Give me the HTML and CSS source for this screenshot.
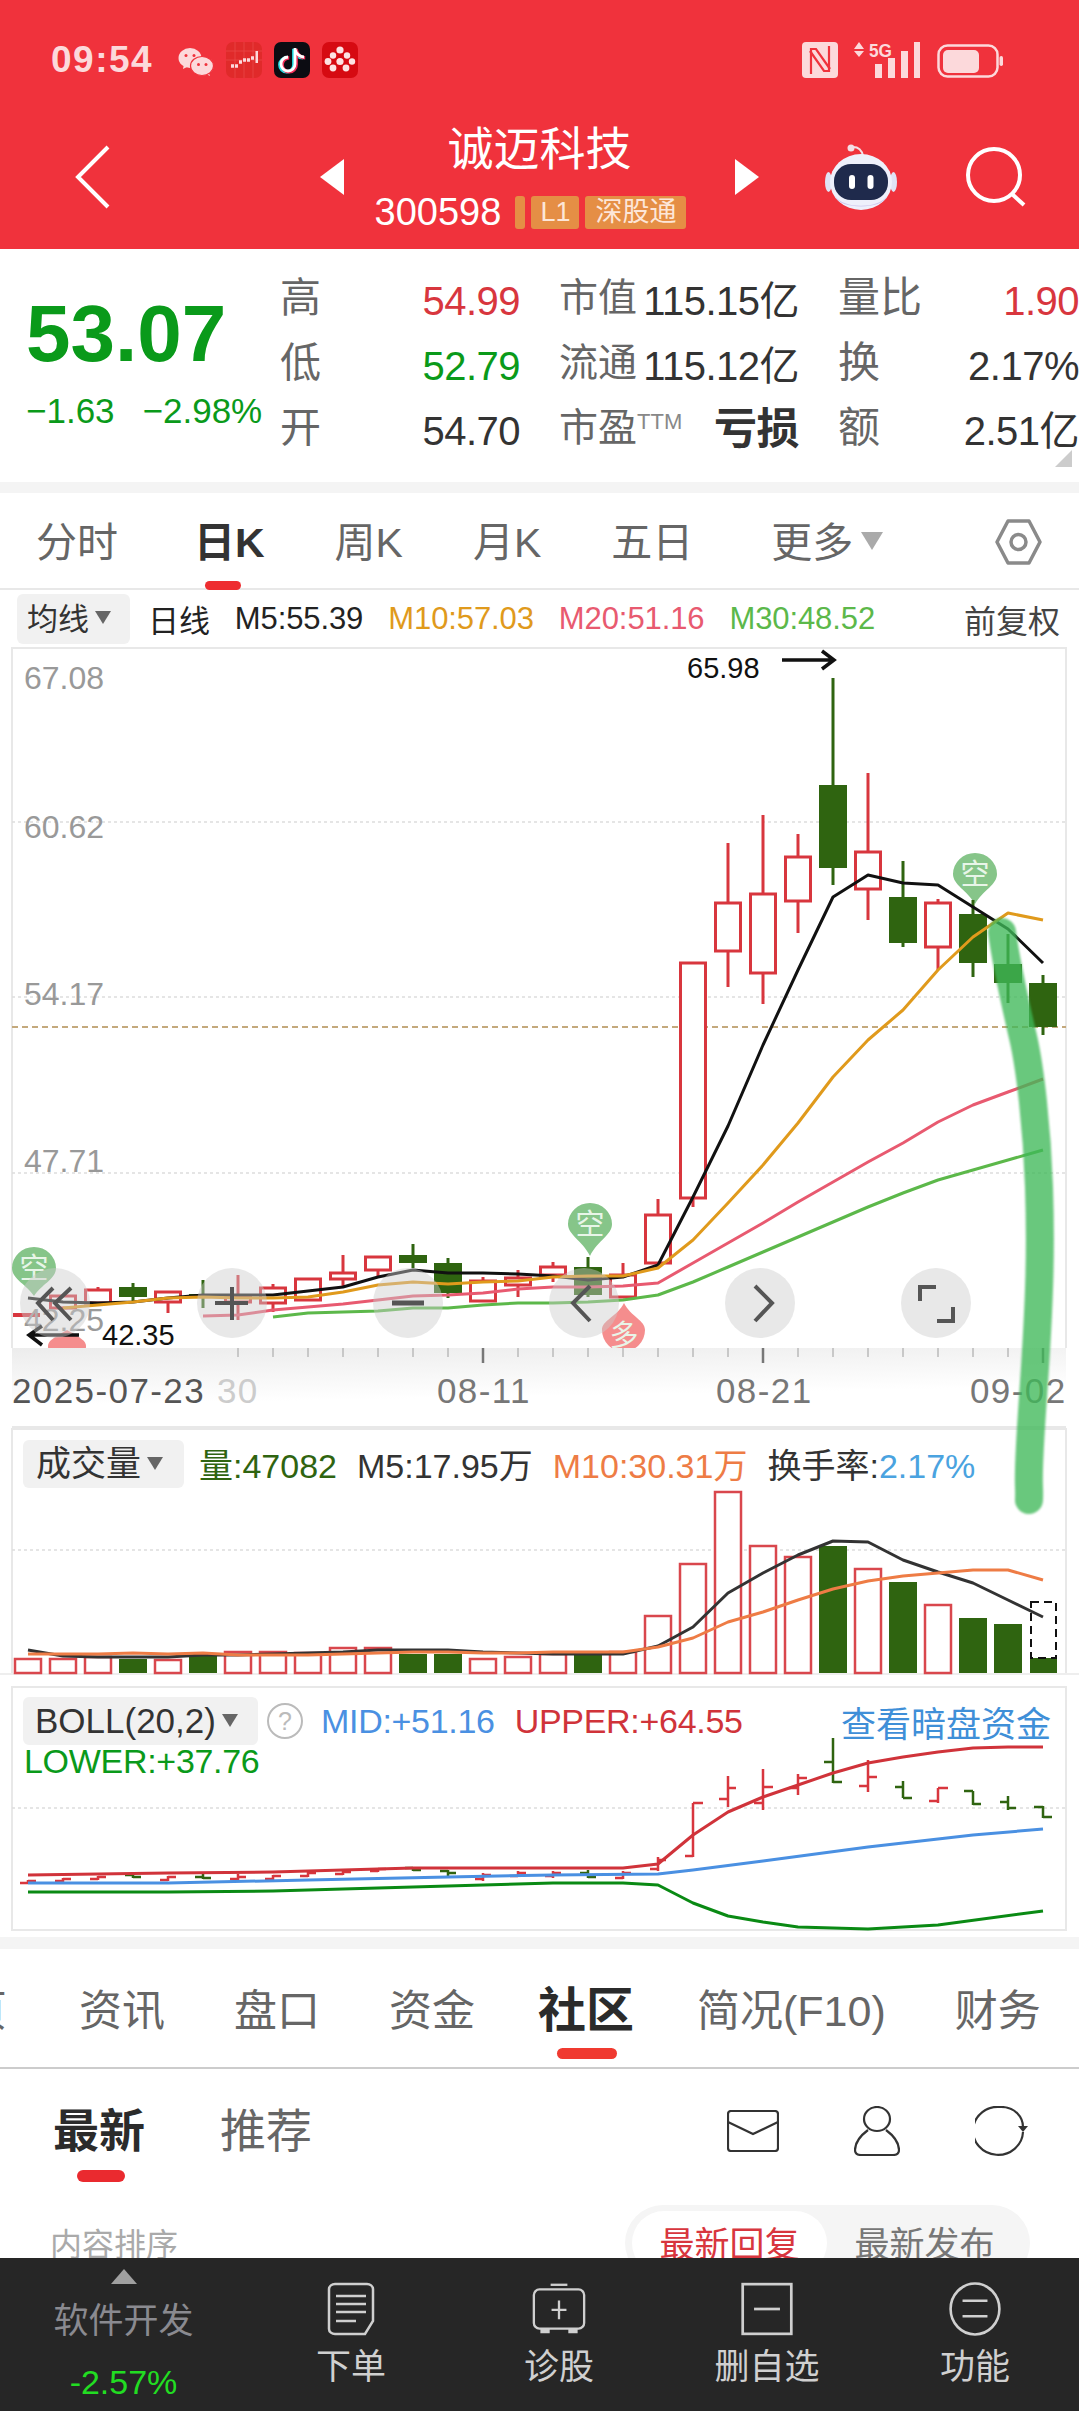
FILE: index.html
```html
<!DOCTYPE html>
<html lang="zh-CN">
<head>
  <meta charset="UTF-8" />
  <title>诚迈科技</title>
  <link rel="stylesheet" href="styles.css">
</head>
<body>
<div class="page">

  <header class="top">
    <div class="status">
      <span class="time">09:54</span>
      <svg class="st-icon wechat" viewBox="0 0 36 36"><path d="M6 22l-1 5 6-3z" fill="#fcd9db"/><ellipse cx="12" cy="16" rx="11.5" ry="10" fill="#fcd9db"/><ellipse cx="8" cy="13.5" rx="1.5" ry="1.5" fill="#f0323c"/><ellipse cx="16" cy="13.5" rx="1.5" ry="1.5" fill="#f0323c"/><path d="M30 29l2 5-6-3z" fill="#fcd9db"/><ellipse cx="24" cy="24" rx="11.5" ry="9.5" fill="#fcd9db" stroke="#f0323c" stroke-width="1.2"/><ellipse cx="20.5" cy="22.5" rx="1.5" ry="1.5" fill="#f0323c"/><ellipse cx="28" cy="22.5" rx="1.5" ry="1.5" fill="#f0323c"/></svg>
      <svg class="st-icon" viewBox="0 0 36 36"><rect width="36" height="36" rx="7" fill="#e02a2a"/><path d="M0 9H36M0 18H36M9 0V36M18 0V36M27 0V36" fill="none" stroke="#e94a4a" stroke-width="0.7"/><path d="M5 24h3M9 24h3M13 20h3M17 18h3M21 18h3M25 16h3" fill="none" stroke="#fcd9db" stroke-width="3.5"/><rect x="29.5" y="9" width="2.5" height="12" fill="#fcd9db"/></svg>
      <svg class="st-icon" viewBox="0 0 36 36"><rect width="36" height="36" rx="7" fill="#0c0c12"/><g fill="none" stroke-width="3.4"><path d="M21 6v16a7 7 0 1 1-7-7M21 7c1 5 5 8 9 8" stroke="#25e0e6" transform="translate(-1.2 0.8)"/><path d="M21 6v16a7 7 0 1 1-7-7M21 7c1 5 5 8 9 8" stroke="#f0305a" transform="translate(1.2 0.8)"/><path d="M21 6v16a7 7 0 1 1-7-7M21 7c1 5 5 8 9 8" stroke="#fff" stroke-width="2.8"/></g></svg>
      <svg class="st-icon" viewBox="0 0 36 36"><rect width="36" height="36" rx="7" fill="#d60a12"/><g fill="#fde3e3"><circle cx="18" cy="8" r="3.6"/><circle cx="11" cy="13.5" r="3.2"/><circle cx="25" cy="13.5" r="3.2"/><circle cx="6" cy="19.5" r="3.4"/><circle cx="18" cy="19.5" r="3.6"/><circle cx="30" cy="19.5" r="3.2"/><circle cx="11" cy="26" r="3.4"/><circle cx="24" cy="26" r="3.4"/></g></svg>
      <span class="spacer"></span>
      <svg class="st-nfc" viewBox="0 0 36 36"><rect x="0" y="0" width="36" height="36" rx="4" fill="#fcd9db"/><path d="M9 32V7h5l14 20" fill="none" stroke="#f0323c" stroke-width="2.2"/><path d="M27 4V29h-5L8 9" fill="none" stroke="#f0323c" stroke-width="2.2"/></svg>
      <svg class="st-signal" viewBox="0 0 67 36"><path d="M5 0l5 7H0zM5 15l5-6H0z" fill="#fcd9db"/><text x="15" y="15" class="st-5g" textLength="23" lengthAdjust="spacingAndGlyphs">5G</text><g fill="#fcd9db"><rect x="21" y="22" width="7" height="14"/><rect x="34" y="16" width="7" height="20"/><rect x="47" y="9" width="7" height="27"/><rect x="60" y="0" width="6" height="36"/></g></svg>
      <svg class="st-batt" viewBox="0 0 66 36"><rect x="1.5" y="3.5" width="59" height="31" rx="9" fill="none" stroke="#fcd9db" stroke-width="2.5"/><rect x="6" y="8" width="36" height="23" rx="5" fill="#fcd9db"/><rect x="62.5" y="14" width="3.5" height="10" rx="1.7" fill="#fcd9db"/></svg>
    </div>
    <div class="title-row">
      <svg class="back" viewBox="0 0 35 64"><path d="M33 2L3 32l30 30" fill="none" stroke="#fff" stroke-width="4"/></svg>
      <span class="tri tri-left"></span>
      <div class="title-block">
        <div class="stock-name">诚迈科技</div>
        <div class="code-row">
          <span class="code">300598</span>
          <span class="tag tag-sliver"></span>
          <span class="tag tag-l1">L1</span>
          <span class="tag">深股通</span>
        </div>
      </div>
      <span class="tri tri-right"></span>
      <svg class="robot" viewBox="0 0 72 66"><circle cx="26" cy="4" r="3.5" fill="#f3dfe6"/><path d="M28 3c6 0 9 4 10 9" fill="none" stroke="#f3dfe6" stroke-width="2"/><ellipse cx="3.5" cy="38" rx="3.5" ry="10" fill="#dfe3f5"/><ellipse cx="68.5" cy="38" rx="3.5" ry="10" fill="#dfe3f5"/><ellipse cx="36" cy="38" rx="31" ry="28" fill="#eef0fb"/><path d="M10 52c8 13 44 13 52 0-4 14-48 14-52 0z" fill="#cfc8ee"/><rect x="9" y="20" width="54" height="36" rx="17" fill="#1f2a4c"/><rect x="24" y="31" width="6" height="14" rx="3" fill="#fff"/><rect x="42.500" y="31" width="6" height="14" rx="3" fill="#fff"/></svg>
      <svg class="search" viewBox="0 0 60 60"><circle cx="28" cy="28" r="26" fill="none" stroke="#fff" stroke-width="4"/><path d="M46 47l12 11" fill="none" stroke="#fff" stroke-width="4"/></svg>
    </div>
  </header>

  <section class="quote">
    <div class="quote-main">
      <div class="last-price">53.07</div>
      <div class="change"><span>−1.63</span><span>−2.98%</span></div>
    </div>
    <div class="quote-grid">
      <div class="q"><span class="q-label q-one">高</span><span class="q-val up">54.99</span></div>
      <div class="q"><span class="q-label">市值</span><span class="q-val">115.15亿</span></div>
      <div class="q"><span class="q-label q-wide">量比</span><span class="q-val up">1.90</span></div>
      <div class="q"><span class="q-label q-one">低</span><span class="q-val down">52.79</span></div>
      <div class="q"><span class="q-label">流通</span><span class="q-val">115.12亿</span></div>
      <div class="q"><span class="q-label q-wide">换</span><span class="q-val">2.17%</span></div>
      <div class="q"><span class="q-label q-one">开</span><span class="q-val">54.70</span></div>
      <div class="q"><span class="q-label">市盈<sup class="ttm">TTM</sup></span><span class="q-val q-bold">亏损</span></div>
      <div class="q"><span class="q-label q-wide">额</span><span class="q-val">2.51亿</span></div>
    </div>
    <span class="corner"></span>
  </section>

  <div class="band"></div>

  <nav class="period-tabs">
    <span class="ptab first">分时</span>
    <span class="ptab active">日K</span>
    <span class="ptab">周K</span>
    <span class="ptab">月K</span>
    <span class="ptab">五日</span>
    <span class="ptab more">更多<i class="caret caret-big"></i></span>
    <svg class="hex" viewBox="0 0 47 46"><path d="M13 2h21l11 21-11 21H13L2 23z" fill="none" stroke="#8a8a8a" stroke-width="3.5" stroke-linejoin="round"/><circle cx="23.5" cy="23" r="7.5" fill="none" stroke="#8a8a8a" stroke-width="3.5"/></svg>
  </nav>

  <div class="charts">
    <div class="ma-bar">
      <span class="chip chip-ma">均线<i class="caret"></i></span>
      <span class="ma ma-day">日线</span>
      <span class="ma">M5:55.39</span>
      <span class="ma c-m10">M10:57.03</span>
      <span class="ma c-m20">M20:51.16</span>
      <span class="ma c-m30">M30:48.52</span>
      <span class="fq">前复权</span>
    </div>

    <svg class="kline" viewBox="0 647 1079 781" width="1079" height="781">
      <defs>
        <linearGradient id="axisfade" x1="0" y1="0" x2="0.25" y2="1">
          <stop offset="0" stop-color="#ececec"/>
          <stop offset="0.7" stop-color="#fff"/>
        </linearGradient>
        <clipPath id="plot"><rect x="0" y="647" width="1079" height="701"/></clipPath>
      </defs>
      <rect x="12" y="1348" width="1054" height="78" fill="url(#axisfade)"/>
      <path class="frame" d="M12 1348V648H1066V1348"/>
      <path class="frame" d="M12 1427H1066"/>
      <path class="grid" d="M12 822H1066M12 997H1066M12 1173H1066"/>
      <path class="now-line" d="M12 1027H1066"/>
      <text class="axis-y" x="24" y="689">67.08</text>
      <text class="axis-y" x="24" y="838">60.62</text>
      <text class="axis-y" x="24" y="1005">54.17</text>
      <text class="axis-y" x="24" y="1172">47.71</text>

      <!-- pins under the candles -->
      <g class="pin-green">
        <path d="M12 1268a22 21 0 0 1 44 0c0 11-14 16-22 28-8-12-22-17-22-28z"/>
        <path d="M568 1224a22 21 0 0 1 44 0c0 11-14 16-22 32-8-16-22-21-22-32z"/>
        <path d="M953 874a22 21 0 0 1 44 0c0 11-14 16-22 30-8-14-22-19-22-30z"/>
      </g>
      <text class="pin-text" x="34" y="1279">空</text>
      <text class="pin-text" x="590" y="1235">空</text>
      <text class="pin-text" x="975" y="885">空</text>

      <!-- wicks -->
      <path class="wick-up" d="M868 773V920M798 834V933M763 815V1004M728 843V987M693 963V1207M658 1199V1263M938 899V970M623 1263V1297M553 1262V1282M518 1270V1297M483 1277V1301M378 1257V1278M343 1255V1288M308 1279V1300M273 1284V1312M238 1275V1320M168 1292V1313M98 1287V1305"/>
      <path class="wick-down" d="M833 678V885M903 861V947M973 900V977M1008 934V1003M1043 975V1035M588 1257V1297M448 1258V1298M413 1244V1268M133 1283V1302M203 1280V1308"/>

      <!-- rising bodies -->
      <g class="body-up">
        <rect x="855.5" y="852" width="25" height="37"/>
        <rect x="785.5" y="857" width="25" height="44"/>
        <rect x="750.5" y="894" width="25" height="79"/>
        <rect x="715.5" y="903" width="25" height="48"/>
        <rect x="680.5" y="963" width="25" height="235"/>
        <rect x="645.5" y="1215" width="25" height="48"/>
        <rect x="925.5" y="903" width="25" height="44"/>
        <rect x="610.5" y="1275" width="25" height="22"/>
        <rect x="540.5" y="1267" width="25" height="8"/>
        <rect x="505.5" y="1278" width="25" height="7"/>
        <rect x="470.5" y="1281" width="25" height="20"/>
        <rect x="365.5" y="1257" width="25" height="13"/>
        <rect x="330.5" y="1273" width="25" height="6"/>
        <rect x="295.5" y="1279" width="25" height="21"/>
        <rect x="260.5" y="1288" width="25" height="15"/>
        <rect x="225.5" y="1297" width="25" height="5"/>
        <rect x="155.5" y="1292" width="25" height="10"/>
        <rect x="85.5" y="1290" width="25" height="13"/>
        <rect x="50.5" y="1296" width="25" height="12"/>
      </g>
      <rect class="body-flat" x="13" y="1313" width="27" height="4"/>

      <!-- falling bodies -->
      <g class="body-down">
        <rect x="819" y="785" width="28" height="83"/>
        <rect x="889" y="897" width="28" height="46"/>
        <rect x="959" y="914" width="28" height="49"/>
        <rect x="994" y="964" width="28" height="19"/>
        <rect x="1029" y="983" width="28" height="44"/>
        <rect x="574" y="1267" width="28" height="28"/>
        <rect x="434" y="1263" width="28" height="30"/>
        <rect x="399" y="1255" width="28" height="8"/>
        <rect x="119" y="1287" width="28" height="10"/>
        <rect x="189" y="1294" width="28" height="3"/>
      </g>

      <!-- moving averages -->
      <path class="line l-m30" d="M273 1317L308 1313 343 1312 378 1311 413 1308 448 1308 483 1305 518 1303 553 1303 588 1302 623 1300 658 1295 693 1282 728 1267 763 1252 798 1237 833 1222 868 1207 903 1193 938 1180 973 1170 1008 1160 1043 1150"/>
      <path class="line l-m20" d="M203 1316L238 1315 273 1310 308 1307 343 1304 378 1300 413 1296 448 1295 483 1293 518 1289 553 1287 588 1287 623 1286 658 1283 693 1263 728 1243 763 1223 798 1202 833 1182 868 1162 903 1143 938 1122 973 1105 1008 1092 1043 1079"/>
      <path class="line l-m5" d="M28 1298L63 1302 98 1303 133 1302 168 1298 203 1295 238 1295 273 1295 308 1291 343 1287 378 1277 413 1270 448 1273 483 1273 518 1274 553 1276 588 1280 623 1277 658 1265 693 1197 728 1126 763 1045 798 970 833 897 868 875 903 883 938 885 973 907 1008 929 1043 963"/>
      <path class="line l-m10" d="M63 1308L98 1305 133 1302 168 1298 203 1297 238 1298 273 1298 308 1297 343 1292 378 1285 413 1282 448 1284 483 1282 518 1281 553 1277 588 1276 623 1276 658 1268 693 1240 728 1203 763 1165 798 1123 833 1077 868 1040 903 1010 938 970 973 937 1008 913 1043 920"/>

      <!-- pins over the lines, cut at the axis -->
      <g clip-path="url(#plot)">
        <path class="pin-red" d="M602 1330a21 21 0 0 0 43 0c0-10-14-13-21-27-7 14-22 17-22 27z"/>
        <text class="pin-text" x="624" y="1346">多</text>
        <path class="pin-red" d="M48 1346a19 19 0 0 0 38 0c0-5-5-8-19-16-14 8-19 11-19 16z"/>
      </g>

      <!-- extreme price arrows -->
      <text class="mark" x="687" y="678">65.98</text>
      <path class="arrow" d="M782 660H833M822 651L834 660 822 669"/>
      <text class="axis-y" x="24" y="1331">42.25</text>
      <text class="mark" x="102" y="1345">42.35</text>
      <path class="arrow" d="M79 1335H30M42 1326L29 1335 42 1345"/>

      <!-- zoom and pan buttons -->
      <g class="nav-dot">
        <circle cx="55" cy="1303" r="35"/>
        <circle cx="232" cy="1303" r="35"/>
        <circle cx="408" cy="1303" r="35"/>
        <circle cx="584" cy="1303" r="35"/>
        <circle cx="760" cy="1303" r="35"/>
        <circle cx="936" cy="1303" r="35"/>
      </g>
      <path class="nav-ico" d="M53 1288L38 1303 53 1320M71 1288L55 1303 71 1320"/>
      <path class="nav-ico" d="M215 1303H248M232 1287V1320"/>
      <path class="nav-ico nav-bold" d="M392 1303H424"/>
      <path class="nav-ico" d="M590 1286L573 1303 590 1321"/>
      <path class="nav-ico" d="M755 1286L772 1303 755 1321"/>
      <path class="nav-ico" d="M936 1287H920V1301M937 1321H953V1307"/>

      <!-- date axis -->
      <path class="tick" d="M238 1348v9M273 1348v9M308 1348v9M343 1348v9M378 1348v9M413 1348v9M448 1348v9M518 1348v9M553 1348v9M588 1348v9M623 1348v9M658 1348v9M693 1348v9M728 1348v9M798 1348v9M833 1348v9M868 1348v9M903 1348v9M938 1348v9M973 1348v9M1008 1348v9"/>
      <path class="tick-big" d="M483 1348v15M763 1348v15M1043 1348v15"/>
      <text class="date date-first" x="12" y="1403">2025-07-23</text>
      <text class="date date-fade" x="217" y="1403">30</text>
      <text class="date" x="437" y="1403">08-11</text>
      <text class="date" x="716" y="1403">08-21</text>
      <text class="date" x="970" y="1403">09-02</text>
    </svg>

    <div class="panel panel-vol">
      <svg class="panel-art" viewBox="0 1428 1079 258" width="1079" height="258">
        <path class="frame" d="M12 1673V1429H1066V1673"/>
        <path class="grid" d="M12 1550H1066"/>
        <rect x="0" y="1673" width="1079" height="2" fill="#eee"/>
        <g class="vol-up">
          <rect x="15" y="1659" width="26" height="14"/>
          <rect x="50" y="1659" width="26" height="14"/>
          <rect x="85" y="1657" width="26" height="16"/>
          <rect x="155" y="1660" width="26" height="13"/>
          <rect x="225" y="1652" width="26" height="21"/>
          <rect x="260" y="1652" width="26" height="21"/>
          <rect x="295" y="1653" width="26" height="20"/>
          <rect x="330" y="1648" width="26" height="25"/>
          <rect x="365" y="1648" width="26" height="25"/>
          <rect x="470" y="1659" width="26" height="14"/>
          <rect x="505" y="1657" width="26" height="16"/>
          <rect x="540" y="1654" width="26" height="19"/>
          <rect x="610" y="1652" width="26" height="21"/>
          <rect x="645" y="1616" width="26" height="57"/>
          <rect x="680" y="1564" width="26" height="109"/>
          <rect x="715" y="1492" width="26" height="181"/>
          <rect x="750" y="1546" width="26" height="127"/>
          <rect x="785" y="1557" width="26" height="116"/>
          <rect x="855" y="1569" width="26" height="104"/>
          <rect x="925" y="1605" width="26" height="68"/>
        </g>
        <g class="vol-down">
          <rect x="119" y="1659" width="28" height="14"/>
          <rect x="189" y="1655" width="28" height="18"/>
          <rect x="399" y="1654" width="28" height="19"/>
          <rect x="434" y="1654" width="28" height="19"/>
          <rect x="574" y="1651" width="28" height="22"/>
          <rect x="819" y="1546" width="28" height="127"/>
          <rect x="889" y="1582" width="28" height="91"/>
          <rect x="959" y="1618" width="28" height="55"/>
          <rect x="994" y="1624" width="28" height="49"/>
          <rect x="1030" y="1658" width="27" height="15"/>
        </g>
        <rect class="vol-live" x="1031" y="1602" width="25" height="56"/>
        <path class="line l-vol5" d="M28 1650L63 1656 98 1657 133 1657 168 1657 203 1655 238 1655 273 1654 308 1653 343 1652 378 1650 413 1650 448 1650 483 1652 518 1653 553 1654 588 1654 623 1654 658 1646 693 1627 728 1593 763 1573 798 1555 833 1541 868 1542 903 1560 938 1572 973 1583 1008 1600 1043 1617"/>
        <path class="line l-vol10" d="M28 1654L63 1654 98 1654 133 1653 168 1654 203 1653 238 1655 273 1655 308 1655 343 1654 378 1653 413 1652 448 1652 483 1653 518 1653 553 1652 588 1652 623 1652 658 1647 693 1638 728 1622 763 1612 798 1600 833 1589 868 1581 903 1576 938 1573 973 1570 1008 1570 1043 1580"/>
      </svg>
      <div class="panel-head">
        <span class="chip chip-vol">成交量<i class="caret"></i></span>
        <span class="pv c-vol">量:47082</span>
        <span class="pv">M5:17.95万</span>
        <span class="pv c-orange">M10:30.31万</span>
        <span class="pv">换手率:<span class="c-blue">2.17%</span></span>
      </div>
    </div>

    <div class="panel panel-boll">
      <svg class="panel-art" viewBox="0 1686 1079 251" width="1079" height="251">
        <path class="frame" d="M12 1687H1066V1930H12z"/>
        <path class="grid" d="M12 1808H1066"/>
        <path class="ohlc-up" d="M868 1760V1792M859 1786h9M868 1777h9M798 1774V1795M789 1788h9M798 1778h9M763 1769V1810M754 1803h9M763 1787h10M728 1776V1807M719 1799h9M728 1788h8M693 1803V1857M685 1856h8M693 1803h10M658 1857V1871M650 1869h8M658 1860h8M938 1788V1803M929 1801h9M938 1788h10M623 1871V1879M615 1878h8M623 1873h8M553 1871V1878M545 1876h8M553 1873h8M518 1871V1877M510 1876h8M518 1873h8M483 1873V1881M475 1879h8M483 1875h8M378 1868V1872M370 1871h8M378 1869h8M343 1870V1875M335 1874h8M343 1872h8M308 1872V1877M300 1876h8M308 1873h8M273 1875V1880M265 1879h8M273 1876h8M238 1874V1881M230 1879h8M238 1877h8M168 1876V1881M160 1880h8M168 1877h8M98 1876V1880M90 1879h8M98 1877h8M63 1878V1882M55 1881h8M63 1879h8M28 1880V1884M20 1883h8M28 1881h8"/>
        <path class="ohlc-down" d="M833 1738V1783M824 1762h9M833 1782h9M903 1781V1798M895 1787h8M903 1798h9M973 1791V1805M964 1791h9M973 1804h8M1008 1796V1810M1000 1802h8M1008 1808h8M1043 1806V1818M1034 1807h9M1043 1817h9M588 1870V1878M580 1873h8M588 1877h8M448 1870V1877M440 1871h8M448 1873h8M413 1867V1871M405 1868h8M413 1870h8M203 1873V1879M195 1877h8M203 1878h8M133 1874V1878M125 1875h8M133 1877h8"/>
        <path class="line l-upper" d="M28 1875L168 1873 273 1872 378 1869 413 1868 483 1868 623 1868 658 1864 693 1835 728 1812 763 1797 798 1785 833 1773 868 1763 903 1757 938 1752 973 1748 1008 1747 1043 1747"/>
        <path class="line l-mid" d="M28 1883L168 1883 308 1880 448 1877 553 1875 658 1874 693 1870 763 1861 868 1847 973 1835 1043 1829"/>
        <path class="line l-lower" d="M28 1892L168 1892 273 1891 378 1888 483 1885 553 1883 623 1883 658 1885 693 1903 728 1916 763 1922 798 1927 868 1929 938 1925 1043 1911"/>
      </svg>
      <div class="panel-head">
        <span class="chip chip-boll">BOLL(20,2)<i class="caret"></i></span>
        <span class="help">?</span>
        <span class="pv pv-tight c-mid">MID:+51.16</span>
        <span class="pv pv-tight c-upper">UPPER:+64.55</span>
        <span class="dark-link">查看暗盘资金</span>
      </div>
      <div class="pv pv-tight c-lower">LOWER:+37.76</div>
    </div>

    <svg class="marker" viewBox="0 593 1079 1000" width="1079" height="1000"><path d="M1002 935C1006 965 1016 1010 1023 1040S1037 1130 1039 1190 1040 1300 1033 1400 1030 1480 1029 1503" fill="none" stroke="#3fb858" stroke-opacity="0.78" stroke-width="28" stroke-linecap="round"/></svg>
  </div>

  <div class="band band-low"></div>

  <nav class="info-tabs">
    <span class="itab clip-left">页</span>
    <span class="itab">资讯</span>
    <span class="itab">盘口</span>
    <span class="itab">资金</span>
    <span class="itab active">社区</span>
    <span class="itab">简况(F10)</span>
    <span class="itab">财务</span>
  </nav>

  <div class="feed-tabs">
    <span class="ftab active">最新</span>
    <span class="ftab">推荐</span>
    <span class="spacer"></span>
    <svg class="feed-ico mail" viewBox="0 0 52 42"><rect x="1" y="1" width="50" height="40" rx="3" fill="none" stroke="#333" stroke-width="2.2"/><path d="M1 12l25 12 25-12" fill="none" stroke="#333" stroke-width="2.2"/></svg>
    <svg class="feed-ico person" viewBox="0 0 46 50"><ellipse cx="23" cy="13" rx="13" ry="12" fill="none" stroke="#333" stroke-width="2.2"/><path d="M14 24C6 30 1 37 1 44c0 4 3 5 6 5h32c3 0 6-1 6-5 0-7-5-14-13-20" fill="none" stroke="#333" stroke-width="2.2"/></svg>
    <svg class="feed-ico refresh" viewBox="0 0 53 50"><path d="M48 26A25 24 0 1 1 26 1c14 0 22 10 22 20" fill="none" stroke="#333" stroke-width="2.2"/><path d="M43 20h10l-5 6z" fill="#333"/></svg>
  </div>

  <div class="sort-row">
    <span class="sort-label">内容排序</span>
    <div class="sort-pill">
      <span class="sort-opt on">最新回复</span>
      <span class="sort-opt">最新发布</span>
    </div>
  </div>

  <footer class="bottom">
    <div class="sector">
      <span class="sector-tri"></span>
      <span class="sector-name">软件开发</span>
      <span class="sector-pct">-2.57%</span>
    </div>
    <div class="action">
      <svg class="action-ico" viewBox="0 0 48 54"><path d="M8 2h32c3 0 6 2 6 5v32l-8 13H8c-3 0-6-2-6-5V7c0-3 3-5 6-5z" fill="none" stroke="#cfcfcf" stroke-width="2.5"/><path d="M9 14h30M9 22h30M9 30h30M9 39h20" fill="none" stroke="#cfcfcf" stroke-width="2.5"/></svg>
      <span>下单</span>
    </div>
    <div class="action">
      <svg class="action-ico" viewBox="0 0 58 54"><path d="M20 1h18" fill="none" stroke="#cfcfcf" stroke-width="2.5"/><rect x="2" y="6" width="54" height="42" rx="6" fill="none" stroke="#cfcfcf" stroke-width="2.5"/><path d="M29 18v20M21 28h16" fill="none" stroke="#cfcfcf" stroke-width="2.5"/><path d="M9 48h10v5H9zM39 48h10v5H39z" fill="#cfcfcf"/></svg>
      <span>诊股</span>
    </div>
    <div class="action">
      <svg class="action-ico" viewBox="0 0 48 50"><rect x="1.5" y="2" width="45" height="46" fill="none" stroke="#cfcfcf" stroke-width="2.5"/><path d="M12 25h24" fill="none" stroke="#cfcfcf" stroke-width="2.5"/></svg>
      <span>删自选</span>
    </div>
    <div class="action">
      <svg class="action-ico" viewBox="0 0 50 52"><ellipse cx="25" cy="26" rx="23.5" ry="24.5" fill="none" stroke="#cfcfcf" stroke-width="2.5"/><path d="M13 18h24M13 33h24" fill="none" stroke="#cfcfcf" stroke-width="2.5"/></svg>
      <span>功能</span>
    </div>
  </footer>

</div>
</body>
</html>
```

FILE: styles.css
```css
html, body {
  margin: 0;
  padding: 0;
  background: #fff;
}
body {
  font-family: "Liberation Sans", "Noto Sans CJK SC", sans-serif;
}
.page {
  width: 1079px;
  height: 2411px;
  overflow: hidden;
  display: flex;
  flex-direction: column;
}
.spacer {
  flex: 1;
}

/* red header */
.top {
  height: 249px;
  flex: none;
  background: #f0323c;
  color: #fff;
}
.status {
  height: 120px;
  display: flex;
  align-items: center;
  padding: 0 76px 0 51px;
  box-sizing: border-box;
}
.time {
  font-size: 37px;
  font-weight: bold;
  letter-spacing: 1.5px;
  color: #fcd9db;
  width: 127px;
}
.st-icon {
  width: 36px;
  height: 36px;
  margin-right: 12px;
}
.st-nfc {
  width: 36px;
  height: 36px;
  margin-right: 16px;
}
.st-signal {
  width: 67px;
  height: 36px;
  margin-right: 16px;
}
.st-5g {
  font-size: 18px;
  font-weight: bold;
  fill: #fcd9db;
}
.st-batt {
  width: 66px;
  height: 36px;
}
.title-row {
  height: 129px;
  display: flex;
  align-items: center;
  padding-bottom: 16px;
  box-sizing: border-box;
}
.back {
  width: 35px;
  height: 64px;
  margin-left: 75px;
}
.tri {
  width: 0;
  height: 0;
  border-top: 18px solid transparent;
  border-bottom: 18px solid transparent;
}
.tri-left {
  margin-left: 210px;
  border-right: 24px solid #fff;
}
.tri-right {
  border-left: 24px solid #fff;
}
.title-block {
  width: 391px;
  align-self: flex-start;
  text-align: center;
}
.stock-name {
  font-size: 46px;
  line-height: 56px;
  margin-top: 1px;
}
.code-row {
  display: flex;
  justify-content: center;
  align-items: center;
  margin-top: 19px;
  padding-right: 12px;
  height: 33px;
}
.code {
  font-size: 38px;
  line-height: 33px;
  margin-right: 14px;
}
.tag {
  background: #e58e45;
  color: #fde6d8;
  font-size: 27px;
  line-height: 33px;
  height: 33px;
  padding: 0 10px;
  border-radius: 3px;
  margin-right: 6px;
}
.tag-sliver {
  padding: 0;
  width: 10px;
}
.tag-l1 {
  padding: 0 9px;
}
.robot {
  width: 72px;
  height: 66px;
  margin-left: 66px;
}
.search {
  width: 60px;
  height: 60px;
  margin-left: 69px;
}

/* quote summary */
.quote {
  height: 233px;
  flex: none;
  display: flex;
  position: relative;
  overflow: hidden;
}
.quote-main {
  width: 280px;
  flex: none;
  padding-left: 26px;
  box-sizing: border-box;
  color: #0a9a1a;
}
.last-price {
  font-size: 80px;
  font-weight: bold;
  line-height: 90px;
  margin-top: 40px;
}
.change {
  display: flex;
  gap: 28px;
  font-size: 35px;
  line-height: 40px;
  margin-top: 12px;
}
.quote-grid {
  display: grid;
  grid-template-columns: 240px 240px 241px;
  grid-auto-rows: 65px;
  column-gap: 39px;
  padding-top: 19px;
}
.q {
  display: flex;
  justify-content: space-between;
  align-items: center;
  white-space: nowrap;
}
.q-label {
  font-size: 39px;
  color: #666;
  line-height: 50px;
  margin-bottom: 6px;
}
.q-one {
  font-size: 41px;
}
.q-wide {
  font-size: 42px;
}
.q-val {
  font-size: 40px;
  line-height: 50px;
  color: #333;
  letter-spacing: -0.5px;
}
.q-bold {
  font-size: 43px;
  font-weight: bold;
  margin-bottom: 4px;
}
.up {
  color: #d8363e;
}
.down {
  color: #0a9a1a;
}
.ttm {
  font-size: 22px;
  line-height: 0;
  color: #888;
  vertical-align: 12px;
}
.corner {
  position: absolute;
  right: 7px;
  bottom: 15px;
  width: 0;
  height: 0;
  border-left: 17px solid transparent;
  border-bottom: 17px solid #ccc;
}
.band {
  height: 11px;
  flex: none;
  background: #f4f4f4;
}
.band-low {
  height: 12px;
}

/* period tabs */
.period-tabs {
  height: 97px;
  flex: none;
  display: flex;
  align-items: center;
  padding: 5px 0 0 36px;
  gap: 70px;
  position: relative;
  border-bottom: 2px solid #e8e8e8;
  box-sizing: border-box;
}
.ptab {
  font-size: 41px;
  color: #666;
  position: relative;
  line-height: 56px;
  white-space: nowrap;
}
.first {
  margin-right: 6px;
}
.ptab.active {
  font-weight: bold;
  color: #333;
}
.ptab.active::after {
  content: "";
  position: absolute;
  left: 11px;
  bottom: -19px;
  width: 36px;
  height: 9px;
  border-radius: 5px;
  background: #ee2d30;
}
.more {
  margin-left: 8px;
}
.caret {
  display: inline-block;
  width: 0;
  height: 0;
  border-left: 8px solid transparent;
  border-right: 8px solid transparent;
  border-top: 13px solid #666;
  margin-left: 6px;
  vertical-align: 6px;
}
.caret-big {
  border-left-width: 11px;
  border-right-width: 11px;
  border-top: 18px solid #aaa;
  margin-left: 8px;
  vertical-align: 7px;
}
.hex {
  width: 47px;
  height: 46px;
  position: absolute;
  left: 995px;
  top: 26px;
}

/* charts */
.charts {
  position: relative;
  flex: none;
}
.ma-bar {
  height: 57px;
  display: flex;
  align-items: center;
  gap: 25px;
  padding-left: 17px;
  padding-right: 19px;
  box-sizing: border-box;
}
.chip {
  background: #f1f1f1;
  border-radius: 6px;
  color: #333;
  white-space: nowrap;
}
.chip-ma {
  width: 113px;
  height: 50px;
  line-height: 52px;
  font-size: 31px;
  padding-left: 10px;
  box-sizing: border-box;
  margin-right: -7px;
}
.ma {
  font-size: 31px;
  letter-spacing: -0.1px;
  color: #222;
  white-space: nowrap;
}
.c-m10 { color: #e09a1c; }
.c-m20 { color: #e85a70; }
.c-m30 { color: #5cb84a; }
.fq {
  margin-left: auto;
  font-size: 32px;
  color: #444;
}
.kline {
  display: block;
}
.frame {
  fill: none;
  stroke: #e8e8e8;
  stroke-width: 2;
}
.grid {
  fill: none;
  stroke: #ddd;
  stroke-width: 1.5;
  stroke-dasharray: 3 3;
}
.now-line {
  fill: none;
  stroke: #c4a97c;
  stroke-width: 2;
  stroke-dasharray: 6 4;
}
.axis-y {
  font-size: 32px;
  fill: #999;
}
.pin-green {
  fill: #86c589;
}
.pin-red {
  fill: #f58d8d;
}
.pin-text {
  font-size: 29px;
  fill: #e8f5e8;
  text-anchor: middle;
}
.wick-up {
  fill: none;
  stroke: #d8363e;
  stroke-width: 3;
}
.wick-down {
  fill: none;
  stroke: #2f6410;
  stroke-width: 3;
}
.body-up rect {
  fill: #fff;
  stroke: #d8363e;
  stroke-width: 3;
}
.body-flat {
  fill: #d8363e;
}
.body-down rect {
  fill: #2f6410;
}
.vol-up rect {
  fill: #fff;
  stroke: #d9474d;
  stroke-width: 2.5;
}
.vol-down rect {
  fill: #2f6410;
}
.vol-live {
  fill: #fff;
  stroke: #111;
  stroke-width: 2;
  stroke-dasharray: 8 5;
}
.ohlc-up {
  fill: none;
  stroke: #d8363e;
  stroke-width: 2.5;
}
.ohlc-down {
  fill: none;
  stroke: #2f6410;
  stroke-width: 2.5;
}
.line {
  fill: none;
  stroke-width: 3;
  stroke-linejoin: round;
}
.l-m5 { stroke: #111; }
.l-m10 { stroke: #e09a1c; }
.l-m20 { stroke: #e85a70; }
.l-m30 { stroke: #5cb84a; }
.l-vol5 { stroke: #333; }
.l-vol10 { stroke: #ee7c45; }
.l-upper { stroke: #d0333a; }
.l-mid { stroke: #4a90e2; }
.l-lower { stroke: #0a8a14; }
.mark {
  font-size: 29px;
  fill: #111;
}
.arrow {
  fill: none;
  stroke: #111;
  stroke-width: 3.5;
}
.nav-dot circle {
  fill: rgba(205, 205, 205, 0.45);
}
.nav-ico {
  fill: none;
  stroke: #555;
  stroke-width: 4;
}
.nav-bold {
  stroke-width: 5;
}
.tick {
  fill: none;
  stroke: #bbb;
  stroke-width: 1.5;
}
.tick-big {
  fill: none;
  stroke: #777;
  stroke-width: 2.5;
}
.date {
  font-size: 35px;
  fill: #777;
  letter-spacing: 1.4px;
}
.date-first {
  fill: #555;
}
.date-fade {
  fill: #ccc;
}

/* volume and boll panels */
.panel {
  position: relative;
}
.panel-vol {
  height: 258px;
}
.panel-boll {
  height: 251px;
}
.panel-art {
  position: absolute;
  left: 0;
  top: 0;
}
.panel-head {
  position: relative;
  display: flex;
  align-items: center;
  padding-left: 23px;
  gap: 20px;
  padding-top: 11px;
  white-space: nowrap;
}
.chip-vol {
  width: 161px;
  height: 48px;
  line-height: 48px;
  font-size: 35px;
  padding-left: 13px;
  box-sizing: border-box;
  margin-right: -5px;
}
.pv {
  font-size: 34px;
  color: #333;
}
.pv-tight {
  letter-spacing: -0.3px;
}
.c-vol { color: #2f6410; }
.c-orange { color: #ee7c45; }
.c-blue { color: #4aa3e0; }
.chip-boll {
  width: 235px;
  height: 48px;
  line-height: 48px;
  font-size: 35px;
  padding-left: 12px;
  box-sizing: border-box;
  letter-spacing: 0;
  margin-right: -11px;
}
.help {
  width: 32px;
  height: 32px;
  line-height: 32px;
  border: 2px solid #bbb;
  border-radius: 50%;
  text-align: center;
  font-size: 25px;
  color: #bbb;
  margin-right: -2px;
}
.c-mid { color: #4a90e2; }
.c-upper { color: #d0333a; }
.c-lower {
  position: relative;
  color: #0a9a1a;
  padding-left: 24px;
  line-height: 34px;
  margin-top: -1px;
}
.dark-link {
  position: absolute;
  left: 841px;
  font-size: 35px;
  color: #3f8fd8;
}
.marker {
  position: absolute;
  left: 0;
  top: 0;
  filter: blur(1px);
  pointer-events: none;
}

/* info tabs */
.info-tabs {
  height: 120px;
  flex: none;
  display: flex;
  align-items: center;
  position: relative;
  border-bottom: 2px solid #ccc;
  box-sizing: border-box;
  padding: 5px 0 0 79px;
  gap: 69px;
}
.itab {
  font-size: 43px;
  color: #666;
  position: relative;
  line-height: 60px;
  white-space: nowrap;
}
.clip-left {
  position: absolute;
  left: -36px;
}
.itab.active {
  font-size: 48px;
  font-weight: bold;
  color: #2b2b2b;
  margin: 0 -6px;
}
.itab.active::after {
  content: "";
  position: absolute;
  left: 19px;
  bottom: -18px;
  width: 60px;
  height: 11px;
  border-radius: 6px;
  background: #f03a30;
}

/* feed tabs */
.feed-tabs {
  height: 116px;
  flex: none;
  display: flex;
  align-items: center;
  padding: 8px 51px 0 53px;
  gap: 75px;
  box-sizing: border-box;
}
.ftab {
  font-size: 46px;
  color: #666;
  position: relative;
  line-height: 60px;
}
.ftab.active {
  font-weight: bold;
  color: #2b2b2b;
}
.ftab.active::after {
  content: "";
  position: absolute;
  left: 24px;
  bottom: -21px;
  width: 48px;
  height: 12px;
  border-radius: 6px;
  background: #ea2a2f;
}
.feed-ico {
  flex: none;
}
.mail {
  width: 52px;
  height: 42px;
}
.person {
  width: 46px;
  height: 50px;
}
.refresh {
  width: 53px;
  height: 50px;
}
.feed-tabs .spacer {
  margin: 0 -75px;
}

/* sort row, cut off by the bottom bar */
.sort-row {
  height: 73px;
  flex: none;
  overflow: hidden;
  display: flex;
  padding: 20px 49px 0 50px;
  box-sizing: border-box;
  justify-content: space-between;
}
.sort-label {
  font-size: 32px;
  line-height: 80px;
  color: #aaa;
}
.sort-pill {
  width: 405px;
  height: 76px;
  padding: 6px 7px;
  box-sizing: border-box;
  background: #f5f5f5;
  border-radius: 38px;
  display: flex;
}
.sort-opt {
  width: 195px;
  height: 64px;
  line-height: 68px;
  text-align: center;
  font-size: 35px;
  color: #777;
  border-radius: 32px;
}
.sort-opt.on {
  background: #fff;
  color: #d8363e;
}

/* dark bottom bar */
.bottom {
  height: 153px;
  flex: none;
  background: #262626;
  display: flex;
  color: #d0d0d0;
}
.sector {
  width: 247px;
  display: flex;
  flex-direction: column;
  align-items: center;
}
.sector-tri {
  width: 0;
  height: 0;
  margin-top: 11px;
  border-left: 13px solid transparent;
  border-right: 13px solid transparent;
  border-bottom: 15px solid #a0a0a0;
}
.sector-name {
  font-size: 35px;
  line-height: 50px;
  color: #8a8a90;
  margin-top: 12px;
}
.sector-pct {
  font-size: 34px;
  line-height: 40px;
  color: #22dd22;
  margin-top: 16px;
}
.action {
  width: 208px;
  display: flex;
  flex-direction: column;
  align-items: center;
  font-size: 35px;
  line-height: 50px;
  padding-top: 24px;
}
.action-ico {
  width: 54px;
  height: 54px;
  margin-bottom: 6px;
}
```
